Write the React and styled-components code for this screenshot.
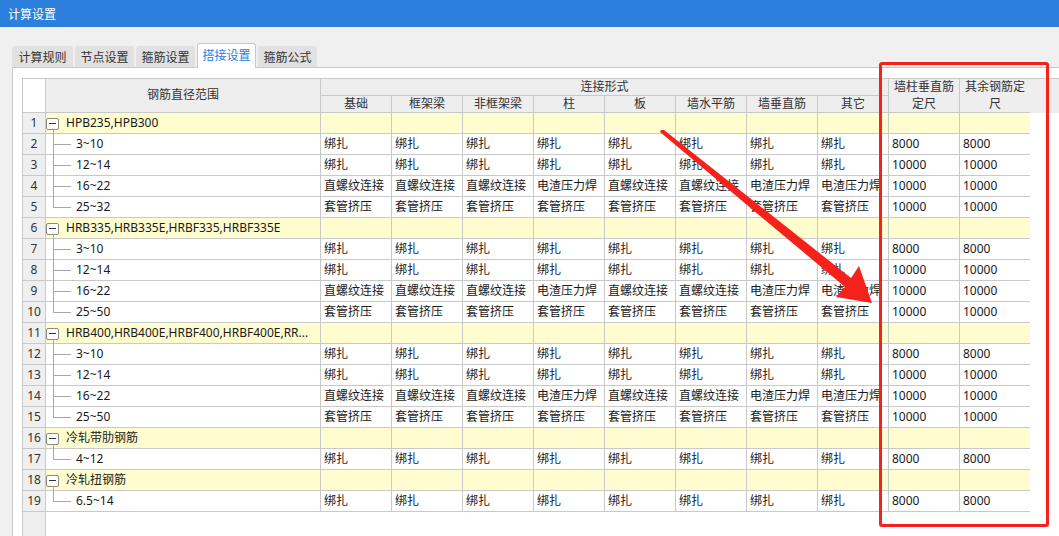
import React from 'react';
import styled, { createGlobalStyle } from 'styled-components';

const GlobalStyle = createGlobalStyle`
  html, body { margin: 0; padding: 0; }
  body {
    font-family: "Noto Sans", "Noto Sans CJK SC", sans-serif;
    font-size: 12px;
    color: #1a1a1a;
    background: #f0f0f0;
  }
  * { box-sizing: border-box; }
`;

const LINE = '#c9c9c9';

const Window = styled.div`
  position: relative;
  width: 1059px;
  height: 536px;
  overflow: hidden;
  display: flex;
  flex-direction: column;
  background: #f0f0f0;
`;

const TitleBar = styled.div`
  flex: none;
  height: 27px;
  display: flex;
  align-items: center;
  padding-left: 8px;
  background: #2d7fdd;
  color: #fff;
  font-size: 12px;
`;

const Body = styled.div`
  flex: 1;
  min-height: 0;
  display: flex;
  flex-direction: column;
  padding: 16px 0 0 12px;
`;

const TabBar = styled.div`
  flex: none;
  position: relative;
  z-index: 1;
  height: 25px;
  margin-bottom: -1px;
  display: flex;
  align-items: flex-end;
  gap: 2px;
`;

const Tab = styled.div`
  width: ${p => p.$w}px;
  height: ${p => (p.$active ? 25 : 21)}px;
  margin-bottom: ${p => (p.$active ? 0 : 1)}px;
  display: flex;
  align-items: center;
  justify-content: center;
  border-radius: 3px 3px 0 0;
  background: ${p => (p.$active ? '#fff' : '#e1e1e1')};
  border: ${p => (p.$active ? `1px solid ${LINE}` : 'none')};
  border-bottom: none;
  color: ${p => (p.$active ? '#2b7de0' : '#333')};
  padding-bottom: ${p => (p.$active ? 2 : 0)}px;
`;

const Panel = styled.div`
  flex: 1;
  min-height: 0;
  display: flex;
  flex-direction: column;
  background: #fff;
  border-top: 1px solid ${LINE};
  border-left: 1px solid ${LINE};
  padding: 10px 0 0 9px;
`;

const SheetTop = styled.div`
  flex: none;
  display: flex;
  align-items: flex-start;
`;

const Grid = styled.div`
  flex: none;
  display: grid;
  grid-template-columns: 22px 274px repeat(10, 70px);
  grid-template-rows: 16px 16px;
  grid-auto-rows: 20px;
  gap: 1px;
  background: ${LINE};
  border: 1px solid ${LINE};
  border-right: none;
`;

const HeaderFill = styled.div`
  flex: 1;
  height: 35px;
  background: #eeeeee;
  border-top: 1px solid ${LINE};
`;

const SheetRest = styled.div`
  flex: 1;
  display: flex;
`;

const RowStrip = styled.div`
  width: 24px;
  background: #efefef;
  border-left: 1px solid ${LINE};
  border-right: 1px solid ${LINE};
`;

const HeadCell = styled.div`
  grid-column: ${p => p.$col || 'auto'};
  grid-row: ${p => p.$row || 'auto'};
  background: ${p => (p.$corner ? '#fff' : '#eeeeee')};
  color: #333;
  display: flex;
  align-items: center;
  justify-content: center;
  text-align: center;
  line-height: 16.5px;
  padding: 0 4px;
`;

const RowNum = styled.div`
  background: #efefef;
  color: #333;
  text-align: center;
  line-height: 20px;
`;

const Cell = styled.div`
  background: ${p => (p.$yellow ? '#fffdd0' : '#fff')};
  line-height: 20px;
  padding: 0 3px;
  white-space: nowrap;
  overflow: hidden;
`;

const TreeCell = styled.div`
  position: relative;
  display: flex;
  align-items: center;
  gap: 7px;
  background: ${p => (p.$parent ? '#fffdd0' : '#fff')};
  padding-left: ${p => (p.$parent ? 0 : 30)}px;
  padding-right: 2px;
  line-height: 20px;
  white-space: nowrap;

  &::before {
    content: '';
    display: ${p => (p.$parent ? 'none' : 'block')};
    position: absolute;
    left: 7px;
    top: -1px;
    width: 1px;
    height: ${p => (p.$last ? 12 : 22)}px;
    background: #a8a8a8;
    z-index: 1;
  }
  &::after {
    content: '';
    position: absolute;
    left: 7px;
    z-index: 1;
    background: #a8a8a8;
    ${p =>
      p.$parent
        ? 'top: 16px; bottom: -1px; width: 1px;'
        : 'top: 10px; width: 18px; height: 1px;'}
  }
`;

const Label = styled.span`
  white-space: nowrap;
`;

const Toggle = styled.span`
  flex: none;
  position: relative;
  width: 13px;
  height: 12px;
  border: 1px solid #8a8a8a;
  border-radius: 2px;
  background: #fff;
  margin-top: 1px;

  &::after {
    content: '';
    position: absolute;
    left: 2px;
    right: 2px;
    top: 4px;
    height: 1px;
    background: #333;
  }
`;

const RedBox = styled.div`
  position: absolute;
  left: 879px;
  top: 62px;
  width: 170px;
  height: 465px;
  border: 3px solid #f5221b;
  border-radius: 3px;
  pointer-events: none;
`;

const ArrowLayer = styled.svg`
  position: absolute;
  left: 0;
  top: 0;
  pointer-events: none;
`;

const tabs = [
  { label: '计算规则', w: 61 },
  { label: '节点设置', w: 59 },
  { label: '箍筋设置', w: 59 },
  { label: '搭接设置', w: 59, active: true },
  { label: '箍筋公式', w: 59 },
];

const subHeads = ['基础', '框架梁', '非框架梁', '柱', '板', '墙水平筋', '墙垂直筋', '其它'];

const TYPES = {
  A: Array(8).fill('绑扎'),
  B: ['直螺纹连接', '直螺纹连接', '直螺纹连接', '电渣压力焊', '直螺纹连接', '直螺纹连接', '电渣压力焊', '电渣压力焊'],
  C: Array(8).fill('套管挤压'),
};

const groups = [
  {
    name: 'HPB235,HPB300',
    rows: [
      ['3~10', 'A', '8000', '8000'],
      ['12~14', 'A', '10000', '10000'],
      ['16~22', 'B', '10000', '10000'],
      ['25~32', 'C', '10000', '10000'],
    ],
  },
  {
    name: 'HRB335,HRB335E,HRBF335,HRBF335E',
    rows: [
      ['3~10', 'A', '8000', '8000'],
      ['12~14', 'A', '10000', '10000'],
      ['16~22', 'B', '10000', '10000'],
      ['25~50', 'C', '10000', '10000'],
    ],
  },
  {
    name: 'HRB400,HRB400E,HRBF400,HRBF400E,RR...',
    rows: [
      ['3~10', 'A', '8000', '8000'],
      ['12~14', 'A', '10000', '10000'],
      ['16~22', 'B', '10000', '10000'],
      ['25~50', 'C', '10000', '10000'],
    ],
  },
  { name: '冷轧带肋钢筋', rows: [['4~12', 'A', '8000', '8000']] },
  { name: '冷轧扭钢筋', rows: [['6.5~14', 'A', '8000', '8000']] },
];

function Rows() {
  const out = [];
  let n = 0;
  groups.forEach((g, gi) => {
    n += 1;
    out.push(
      <React.Fragment key={`g${gi}`}>
        <RowNum>{n}</RowNum>
        <TreeCell $parent>
          <Toggle />
          <Label>{g.name}</Label>
        </TreeCell>
        {Array.from({ length: 10 }).map((_, i) => (
          <Cell key={i} $yellow />
        ))}
      </React.Fragment>
    );
    g.rows.forEach((r, ri) => {
      n += 1;
      out.push(
        <React.Fragment key={`r${gi}-${ri}`}>
          <RowNum>{n}</RowNum>
          <TreeCell $last={ri === g.rows.length - 1}>
            <Label>{r[0]}</Label>
          </TreeCell>
          {TYPES[r[1]].map((t, i) => (
            <Cell key={i}>{t}</Cell>
          ))}
          <Cell>{r[2]}</Cell>
          <Cell>{r[3]}</Cell>
        </React.Fragment>
      );
    });
  });
  return out;
}

export default function App() {
  return (
    <>
      <GlobalStyle />
      <Window>
        <TitleBar>计算设置</TitleBar>
        <Body>
          <TabBar>
            {tabs.map(t => (
              <Tab key={t.label} $w={t.w} $active={t.active}>
                {t.label}
              </Tab>
            ))}
          </TabBar>
          <Panel>
            <SheetTop>
              <Grid>
                <HeadCell $corner $row="1 / span 2" $col="1" />
                <HeadCell $row="1 / span 2" $col="2">钢筋直径范围</HeadCell>
                <HeadCell $row="1" $col="3 / span 8">连接形式</HeadCell>
                <HeadCell $row="1 / span 2" $col="11">墙柱垂直筋定尺</HeadCell>
                <HeadCell $row="1 / span 2" $col="12">其余钢筋定尺</HeadCell>
                {subHeads.map((h, i) => (
                  <HeadCell key={h} $row="2" $col={`${i + 3}`}>
                    {h}
                  </HeadCell>
                ))}
                <Rows />
              </Grid>
              <HeaderFill />
            </SheetTop>
            <SheetRest>
              <RowStrip />
            </SheetRest>
          </Panel>
        </Body>
        <RedBox />
        <ArrowLayer width="1059" height="536" viewBox="0 0 1059 536">
          <polygon
            points="661,130 664,130 851,278 859,266 872,303 836,297 845,287 660,132"
            fill="#f5221b"
          />
        </ArrowLayer>
      </Window>
    </>
  );
}
